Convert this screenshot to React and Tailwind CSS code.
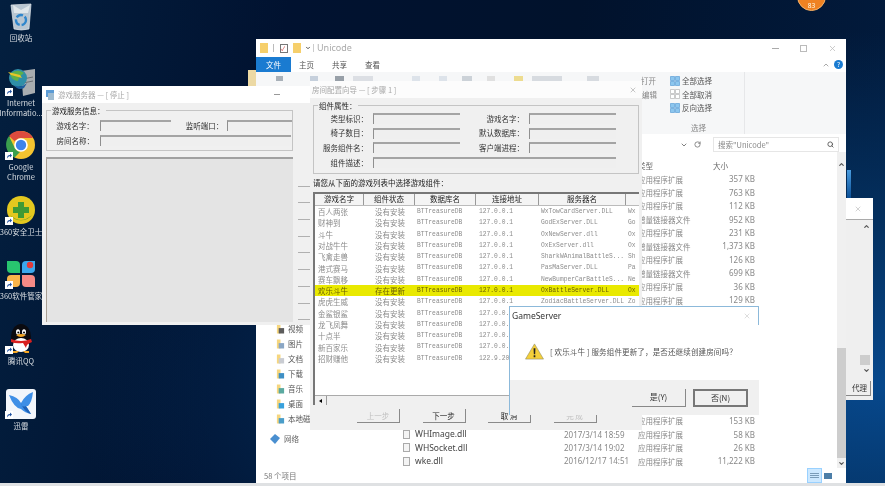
import { ChevronDown, ChevronUp, RotateCw, Search, X } from "lucide-react"

const cjk = "font-['Noto_Sans_CJK_SC',sans-serif]"

const ShortcutMark = () => (
  <svg viewBox="0 0 8 8" className="absolute left-[4px] bottom-0 w-[8px] h-[8px]">
    <rect width="8" height="8" fill="#fff" />
    <path d="M2 6.5 C2 4 3 3 5 3 L5 1.6 L7 3.6 L5 5.6 L5 4.2 C3.8 4.2 3 4.8 2 6.5Z" fill="#1c4fa0" />
  </svg>
)

const RecycleBin = () => (
  <svg viewBox="0 0 30 30" className="w-[30px] h-[30px]">
    <path d="M5 4 L25 3 L23 28 Q15 30 8 28Z" fill="#b8c6d2" stroke="#e4eaee" strokeWidth="0.7" />
    <path d="M7 4 L15 9 L24 4 L22 12 L8 12Z" fill="#dfe6ea" />
    <circle cx="15" cy="19" r="5" fill="none" stroke="#2f86cc" strokeWidth="2.4" strokeDasharray="7 2" />
  </svg>
)

const IisIcon = () => (
  <svg viewBox="0 0 30 30" className="w-[30px] h-[30px]">
    <path d="M15 5 L29 3 L29 27 L17 30Z" fill="#a9adb0" />
    <path d="M17 13 L27 11 M17 17 L27 15" stroke="#6c7074" strokeWidth="1" />
    <circle cx="12" cy="12" r="9" fill="#2f8fa8" />
    <path d="M4 8 Q11 2 18 7 Q13 10 12 15 Q6 15 4 8Z" fill="#5fb04a" />
    <path d="M2 6 L14 9 L16 12 L5 9Z" fill="#e8c52a" />
    <path d="M8 19 Q14 23 21 17 L18 22 Q12 25 8 19Z" fill="#1c5f9e" />
  </svg>
)

const ChromeIcon = () => (
  <svg viewBox="0 0 30 30" className="w-[30px] h-[30px]">
    <circle cx="15" cy="15" r="14" fill="#f4c430" />
    <path d="M15 1 A14 14 0 0 1 27.1 8 L15 8 A7 7 0 0 0 8.9 11.5 L3 6 A14 14 0 0 1 15 1Z" fill="#dd4b3e" />
    <path d="M3 6 L9 18.5 A7 7 0 0 0 14 22 L8.5 27.4 A14 14 0 0 1 3 6Z" fill="#3a9e4d" />
    <circle cx="15" cy="15" r="6.8" fill="#fff" />
    <circle cx="15" cy="15" r="5.2" fill="#3f83ea" />
  </svg>
)

const SafeIcon = () => (
  <svg viewBox="0 0 30 30" className="w-[30px] h-[30px]">
    <circle cx="15" cy="15" r="14" fill="#e3c81f" />
    <path d="M4 20 A14 14 0 0 0 26 20 Q15 30 4 20Z" fill="#4e9a2c" />
    <path d="M12 7 H18 V12 H23 V18 H18 V23 H12 V18 H7 V12 H12Z" fill="#3f9a35" />
  </svg>
)

const SoftIcon = () => (
  <svg viewBox="0 0 30 30" className="w-[30px] h-[30px]">
    <path d="M1 2 H10 Q14 2 14 6 V14 H5 Q1 14 1 10Z" fill="#28c46f" />
    <path d="M29 2 H20 Q16 2 16 6 V14 H25 Q29 14 29 10Z" fill="#3aa8ee" />
    <path d="M1 28 H10 Q14 28 14 24 V16 H5 Q1 16 1 20Z" fill="#f9b54a" />
    <path d="M29 28 H20 Q16 28 16 24 V16 H25 Q29 16 29 20Z" fill="#f58a86" />
    <circle cx="24" cy="6" r="3.2" fill="#e23b3b" />
  </svg>
)

const QqIcon = () => (
  <svg viewBox="0 0 30 30" className="w-[30px] h-[30px]">
    <ellipse cx="15" cy="13" ry="13" rx="10" fill="#0b0b10" />
    <ellipse cx="15" cy="21" rx="8" ry="7" fill="#fff" />
    <ellipse cx="12" cy="8" rx="2" ry="2.8" fill="#fff" />
    <ellipse cx="18" cy="8" rx="2" ry="2.8" fill="#fff" />
    <circle cx="12.3" cy="8.4" r="1" fill="#000" />
    <circle cx="18" cy="8.4" r="1" fill="#000" />
    <path d="M10 11 Q15 9 20 11 Q15 15 10 11Z" fill="#f5a623" />
    <path d="M5 15 Q15 19 25 15 L26 18 Q20 20 20 24 L17 19 Q10 20 5 18Z" fill="#d8201f" />
    <path d="M7 27 L13 27 L11 29 L7 29Z M17 27 L23 27 L23 29 L19 29Z" fill="#f5a623" />
  </svg>
)

const XunleiIcon = () => (
  <svg viewBox="0 0 30 30" className="w-[30px] h-[30px]">
    <rect width="30" height="30" rx="3" fill="#f3f6fb" />
    <path d="M3 6 Q12 8 15 14 Q19 6 27 3 Q26 13 22 17 L20 17 L25 25 Q19 24 15 20 Q8 19 3 6Z" fill="#3f8fe6" />
    <path d="M15 14 Q16 19 20 17 L25 25 Q18 23 15 14Z" fill="#1f62b8" />
  </svg>
)

const desktopItems = [
  { key: "bin", icon: <RecycleBin />, lines: ["回收站"] },
  { key: "iis", icon: <IisIcon />, lines: ["Internet", "Informatio..."], shortcut: true },
  { key: "chrome", icon: <ChromeIcon />, lines: ["Google", "Chrome"], shortcut: true },
  { key: "safe", icon: <SafeIcon />, lines: ["360安全卫士"], shortcut: true },
  { key: "soft", icon: <SoftIcon />, lines: ["360软件管家"], shortcut: true },
  { key: "qq", icon: <QqIcon />, lines: ["腾讯QQ"], shortcut: true },
  { key: "xl", icon: <XunleiIcon />, lines: ["迅雷"], shortcut: true },
]

const Folder = ({ color = "#f6cf6b" }) => (
  <svg viewBox="0 0 10 10" className="w-[9px] h-[10px] shrink-0">
    <path d="M1 0 H5 V10 H1Z" fill="#f6d67e" />
    <path d="M3 4 H9 V10 H3Z" fill={color} />
  </svg>
)

const sideItems = [
  { name: "视频", color: "#5c5c5c" },
  { name: "图片", color: "#8aa6c4" },
  { name: "文档", color: "#c9ccd2" },
  { name: "下载", color: "#3f8fc4" },
  { name: "音乐", color: "#5aa9a0" },
  { name: "桌面", color: "#38a1dc" },
]

const appExt = "应用程序扩展"
const ilk = "增量链接器文件"
const fileRows = [
  { type: appExt, size: "357 KB" },
  { type: appExt, size: "763 KB" },
  { type: appExt, size: "112 KB" },
  { type: ilk, size: "952 KB" },
  { type: appExt, size: "231 KB" },
  { type: ilk, size: "1,373 KB" },
  { type: appExt, size: "126 KB" },
  { type: ilk, size: "699 KB" },
  { type: appExt, size: "36 KB" },
  { type: appExt, size: "129 KB" },
  {}, {}, {}, {}, {}, {}, {}, {},
  { type: appExt, size: "153 KB" },
  { name: "WHImage.dll", date: "2017/3/14 18:59", type: appExt, size: "58 KB" },
  { name: "WHSocket.dll", date: "2017/3/14 19:02", type: appExt, size: "26 KB" },
  { name: "wke.dll", date: "2016/12/17 14:51", type: appExt, size: "11,222 KB" },
]

const games = [
  ["百人两张", "没有安装", "127.0.0.1", "WxTowCardServer.DLL", "Wx"],
  ["财神到", "没有安装", "127.0.0.1", "GodExServer.DLL", "Go"],
  ["斗牛", "没有安装", "127.0.0.1", "OxNewServer.dll", "Ox"],
  ["对战牛牛", "没有安装", "127.0.0.1", "OxExServer.dll", "Ox"],
  ["飞禽走兽", "没有安装", "127.0.0.1", "SharkWAnimalBattleS...", "Sh"],
  ["港式赛马", "没有安装", "127.0.0.1", "PasMaServer.DLL", "Pa"],
  ["赛车飘移", "没有安装", "127.0.0.1", "NewBumperCarBattleS...", "Ne"],
  ["欢乐斗牛", "存在更新", "127.0.0.1", "OxBattleServer.DLL", "Ox"],
  ["虎虎生威", "没有安装", "127.0.0.1", "ZodiacBattleServer.DLL", "Zo"],
  ["金鲨银鲨", "没有安装", "127.0.0.1", "", ""],
  ["龙飞凤舞", "没有安装", "127.0.0.1", "", ""],
  ["十点半", "没有安装", "127.0.0.1", "", ""],
  ["新百家乐", "没有安装", "127.0.0.1", "", ""],
  ["招财赚他", "没有安装", "122.9.20", "", ""],
]

const Field = ({ className }) => (
  <div className={`h-[11px] border-t-2 border-l border-t-[#a4a4a4] border-l-[#8f8f8f] bg-[#efefef] ${className}`} />
)

const Label = ({ className, children }) => (
  <div className={`text-[7.5px] leading-none whitespace-nowrap text-[#333] ${className}`}>{children}</div>
)

const GroupBox = ({ title, className, children }) => (
  <div className={`relative border border-[#c4c4c4] ${className}`}>
    <div className="absolute left-[4px] top-[-5px] bg-[#f0f0f0] px-[1px] text-[7.5px] leading-[9px] text-[#222]">{title}</div>
    {children}
  </div>
)

const WizardButton = ({ disabled, children }) => (
  <div
    className={`w-[43px] h-[14px] flex items-center justify-center border-b border-r border-b-[#8a8a8a] border-r-[#8a8a8a] text-[7.5px] ${
      disabled ? "text-[#c0c0c0]" : "text-[#222]"
    }`}
  >
    {children}
  </div>
)

const Explorer = () => (
  <div className={`absolute left-[256px] top-[39px] w-[590px] h-[444px] bg-white flex flex-col ${cjk}`}>
    <div className="h-[18px] flex items-center pl-[4px] text-[9px] text-[#aaa]">
      <div className="w-[8px] h-[10px] bg-[#f6cf6b]" />
      <div className="w-px h-[8px] bg-[#bbb] ml-[5px]" />
      <div className="w-[8px] h-[9px] border border-[#777] ml-[6px] text-[6px] leading-[7px] text-[#c33]">✓</div>
      <div className="w-[8px] h-[10px] bg-[#f6cf6b] ml-[5px]" />
      <ChevronDown className="w-[6px] h-[6px] ml-[4px] text-[#555]" strokeWidth={4} />
      <div className="w-px h-[8px] bg-[#ccc] ml-[2px]" />
      <span className="ml-[3px] font-['Noto_Sans',sans-serif]">Unicode</span>
      <div className="ml-auto flex items-center">
        <div className="w-[7px] h-px bg-[#aaa] mr-[21px]" />
        <div className="w-[7px] h-[7px] border border-[#bbb] mr-[21px]" />
        <X className="w-[9px] h-[9px] text-[#bbb] mr-[9px]" strokeWidth={2} />
      </div>
    </div>
    <div className="h-[15px] flex items-center text-[7.5px] text-[#555]">
      <div className="w-[35px] h-full bg-[#1a7bd1] text-white flex items-center justify-center">文件</div>
      <div className="ml-[8px]">主页</div>
      <div className="ml-[18px]">共享</div>
      <div className="ml-[18px]">查看</div>
      <ChevronUp className="ml-auto w-[8px] h-[8px] text-[#aaa] mr-[4px]" strokeWidth={3} />
      <div className="w-[9px] h-[9px] rounded-full bg-[#1a7bd1] text-white text-[6.5px] leading-[9px] text-center mr-[3px]">?</div>
    </div>
    <div className="h-[62px] bg-[#f6f7f8] flex text-[7.5px] text-[#888]">
      <div className="w-[385px] flex flex-col">
        <div className="h-[5px] mt-[4px] flex items-center gap-[9px] pl-[20px]">
          <div className="w-[7px] h-[5px] bg-[#a8b0b8]" />
          <div className="w-[8px] h-[5px] bg-[#c6d0dc] ml-[18px]" />
          <div className="w-[9px] h-[5px] bg-[#98a0a8] ml-[8px]" />
          <div className="w-[20px] h-[5px] bg-[#dcdfe4]" />
          <div className="w-[8px] h-[5px] bg-[#dde3ea] ml-[30px]" />
          <div className="w-[8px] h-[5px] bg-[#dde3ea] ml-[10px]" />
          <div className="w-[10px] h-[5px] bg-[#ccd2d8] ml-[6px]" />
          <div className="w-[8px] h-[5px] bg-[#e0e0e0] ml-[6px]" />
          <div className="w-[9px] h-[5px] bg-[#eddc90] ml-[10px]" />
          <div className="w-[30px] h-[5px] bg-[#d7dbe0]" />
          <div className="w-[12px] h-[5px] bg-[#d7dbe0] ml-[16px]" />
        </div>
        <div className="ml-[385px] mt-[-5px] leading-[10px] whitespace-nowrap">打开</div>
        <div className="ml-[386px] mt-[3.5px] leading-[10px] whitespace-nowrap">编辑</div>
      </div>
      <div className="w-[75px] ml-[29px] border-r border-[#e6e7e9] flex flex-col pt-[2px] text-[#555]">
        {["全部选择", "全部取消", "反向选择"].map((label, i) => (
          <div key={label} className="h-[13.5px] flex items-center gap-[2px]">
            <svg viewBox="0 0 10 10" className="w-[10px] h-[10px]">
              <path d="M0.5 0.5 H4.5 V4.5 H0.5Z M5.5 0.5 H9.5 V4.5 H5.5Z M0.5 5.5 H4.5 V9.5 H0.5Z M5.5 5.5 H9.5 V9.5 H5.5Z" fill={i === 1 ? "#fff" : "#8cc6ee"} stroke={i === 1 ? "#aaa" : "#4c96d4"} strokeWidth="0.6" />
            </svg>
            {label}
          </div>
        ))}
        <div className="pl-[21px] mt-[7px] text-[#888]">选择</div>
      </div>
    </div>
    <div className="h-[18px] flex items-end">
      <div className="ml-auto flex items-center gap-[6px] mr-[7px] text-[#666]">
        <ChevronDown className="w-[8px] h-[8px]" strokeWidth={2.5} />
        <RotateCw className="w-[7px] h-[7px]" strokeWidth={2.5} />
        <div className="w-[126px] h-[15px] ml-[6px] border border-[#e6e6e6] flex items-center pl-[4px] pr-[4px] text-[7.5px] text-[#888]">
          搜索"Unicode"
          <Search className="ml-auto w-[7px] h-[7px] text-[#555]" strokeWidth={3} />
        </div>
      </div>
    </div>
    <div className="flex-1 flex min-h-0">
      <div className="w-[144px] flex flex-col justify-end pb-[16.5px] text-[7.5px] text-[#555]">
        {sideItems.map((item) => (
          <div key={item.name} className="h-[15px] flex items-center gap-[3px] pl-[20px]">
            <Folder color={item.color} />
            {item.name}
          </div>
        ))}
        <div className="h-[15px] flex items-center gap-[3px] pl-[20px]">
          <Folder color="#4a9dc9" />
          本地磁盘
        </div>
        <div className="h-[25px] flex items-center gap-[4px] pl-[14px] text-[#666]">
          <svg viewBox="0 0 10 10" className="w-[10px] h-[10px]">
            <path d="M5 0 L10 4 L5 10 L0 5Z" fill="#4a8fd0" />
          </svg>
          网络
        </div>
      </div>
      <div className="w-[355px] pt-[6.5px]">
        <div className="h-[14px] flex items-center text-[7.5px] text-[#666]">
          <div className="ml-[238px] w-[75px]">类型</div>
          <div>大小</div>
        </div>
        {fileRows.map((row, i) => (
          <div key={i} className="h-[13.45px] flex items-center text-[7.5px] text-[#888]">
            <div className="w-[15px] pl-[3px]">
              {row.name && <div className="w-[7px] h-[9px] border border-[#aaa] bg-[#f4f4f4]" />}
            </div>
            <div className="w-[149px] font-['Noto_Sans',sans-serif] text-[8.5px] text-[#444]">{row.name}</div>
            <div className="w-[74px] font-['Noto_Sans',sans-serif] text-[8px] whitespace-nowrap">{row.date}</div>
            <div className="w-[73px] whitespace-nowrap">{row.type}</div>
            <div className="w-[44px] text-right font-['Noto_Sans',sans-serif] text-[8px] whitespace-nowrap">{row.size}</div>
          </div>
        ))}
      </div>
      <div className="ml-auto w-[9px] flex flex-col">
        <div className="h-[16px] flex items-end justify-center bg-[#f0f0f0]">
          <ChevronUp className="w-[7px] h-[7px] text-[#555]" strokeWidth={4} />
        </div>
        <div className="h-[180px] bg-[#f0f0f0]" />
        <div className="h-[110px] bg-[#cdcdcd]" />
        <div className="h-[10px] flex items-center justify-center bg-[#f0f0f0]">
          <ChevronDown className="w-[7px] h-[7px] text-[#555]" strokeWidth={4} />
        </div>
      </div>
    </div>
    <div className="h-[15px] flex items-center pl-[8px] text-[7.5px] text-[#777]">
      58 个项目
      <div className="ml-auto mr-[14px] flex items-center">
        <div className="w-[15px] h-[15px] bg-[#cce8ff] border border-[#99d1ff] flex flex-col justify-center gap-[1px] px-[2px]">
          <div className="h-px bg-[#7a9cb8]" />
          <div className="h-px bg-[#7a9cb8]" />
          <div className="h-px bg-[#7a9cb8]" />
        </div>
        <div className="w-[8px] h-[6px] ml-[2px] bg-[#4c7ea8]" />
      </div>
    </div>
  </div>
)

const GameWindow = () => (
  <div className={`absolute left-[42px] top-[86px] w-[268px] h-[239px] bg-[#f0f0f0] flex flex-col ${cjk}`}>
    <div className="h-[17px] bg-white flex items-center pl-[3px] text-[7.5px] text-[#a8a8a8]">
      <svg viewBox="0 0 10 10" className="w-[10px] h-[10px] mr-[3px]">
        <rect x="1" y="0" width="8" height="7" fill="#5b9bd5" />
        <rect x="3" y="3" width="6" height="7" fill="#9ebbd0" />
      </svg>
      游戏服务器 — [ 停止 ]
      <div className="w-[6px] h-px bg-[#999] ml-[145px]" />
    </div>
    <div className="flex flex-1 min-h-0">
      <div className="w-[251px] pl-[4px] pt-[7px] flex flex-col">
        <GroupBox title="游戏服务信息：" className="w-[247px] h-[41px] pt-[7px] pl-[1px]">
          <div className="flex items-center h-[15px]">
            <Label className="w-[46px] text-right">游戏名字：</Label>
            <Field className="w-[72px] ml-[6px]" />
            <Label className="w-[52px] text-right">监听端口：</Label>
            <Field className="w-[65px] ml-[4px]" />
          </div>
          <div className="flex items-center h-[15px]">
            <Label className="w-[46px] text-right">房间名称：</Label>
            <Field className="w-[191px] ml-[6px]" />
          </div>
        </GroupBox>
        <div className="mt-[6px] w-[247px] h-[165px] bg-[#e4e4e4] border-t-2 border-l border-t-[#a0a0a0] border-l-[#a89f94]" />
      </div>
      <div className="flex-1 flex flex-col pt-[67px] pl-[5px]">
        {[0, 1, 2, 3, 4, 5, 6, 7, 8].map((n) => (
          <div key={n} className="h-[16.7px] shrink-0 border-b border-[#b0b0b0]" />
        ))}
      </div>
    </div>
  </div>
)

const WizardWindow = () => (
  <div className={`absolute left-[310px] top-[81px] w-[332px] h-[349px] bg-[#f0f0f0] flex flex-col ${cjk}`}>
    <div className="h-[17px] bg-[#fcfcfc] flex items-center pl-[2px] text-[7.5px] text-[#a8a8a8]">
      房间配置向导 — [ 步骤 1 ]
      <X className="ml-auto mr-[5px] w-[8px] h-[8px] text-[#aaa]" strokeWidth={2} />
    </div>
    <div className="pl-[3px] flex flex-col flex-1 min-h-0">
      <GroupBox title="组件属性：" className="mt-[7px] w-[326px] h-[69px] pt-[5px]">
        {[
          ["类型标识：", "游戏名字："],
          ["椅子数目：", "默认数据库："],
          ["服务组件名：", "客户端进程："],
        ].map(([left, right]) => (
          <div key={left} className="flex items-center h-[14.7px]">
            <Label className="w-[54px] text-right">{left}</Label>
            <Field className="w-[87px] ml-[5px]" />
            <Label className="w-[64px] text-right">{right}</Label>
            <Field className="w-[87px] ml-[5px]" />
          </div>
        ))}
        <div className="flex items-center h-[14.7px]">
          <Label className="w-[54px] text-right">组件描述：</Label>
          <Field className="w-[243px] ml-[5px]" />
        </div>
      </GroupBox>
      <div className="h-[18px] flex items-center text-[7.5px] text-[#222]">请您从下面的游戏列表中选择游戏组件：</div>
      <div className="w-[326px] h-[213px] bg-white border-t-2 border-l-2 border-t-[#777] border-l-[#777] flex flex-col overflow-hidden">
        <div className="h-[12px] flex text-[7.5px] text-[#222] bg-[#f4f4f4] border-b border-[#bbb] text-center leading-[10px]">
          <div className="w-[49px] border-r border-[#999]">游戏名字</div>
          <div className="w-[51px] border-r border-[#999]">组件状态</div>
          <div className="w-[61px] border-r border-[#999]">数据库名</div>
          <div className="w-[63px] border-r border-[#999]">连接地址</div>
          <div className="w-[87px] border-r border-[#999]">服务器名</div>
        </div>
        <div className="flex-1 text-[7.5px] text-[#8c8c8c]">
          {games.map(([name, state, ip, server, extra]) => {
            const active = state === "存在更新"
            return (
              <div key={name} className={`h-[11.3px] flex items-center whitespace-nowrap ${active ? "bg-[#e9e900] text-[#6e6200]" : ""}`}>
                <div className="w-[49px] pl-[3px]">{name}</div>
                <div className="w-[51px] pl-[11px]">{state}</div>
                <div className="w-[61px] pl-[2px] font-['Liberation_Mono',monospace] text-[6.3px]">BTTreasureDB</div>
                <div className="w-[63px] pl-[3px] font-['Liberation_Mono',monospace] text-[6.3px]">{ip}</div>
                <div className="w-[87px] pl-[2px] font-['Liberation_Mono',monospace] text-[6.3px] overflow-hidden">{server}</div>
                <div className="pl-[2px] font-['Liberation_Mono',monospace] text-[6.3px]">{extra}</div>
              </div>
            )
          })}
        </div>
        <div className="h-[10px] flex bg-[#f0f0f0] border-t border-[#aaa]">
          <div className="w-[12px] flex items-center justify-center border-r border-[#999]">
            <div className="w-0 h-0 border-y-[2px] border-y-transparent border-r-[3px] border-r-black" />
          </div>
        </div>
      </div>
      <div className="flex gap-[22.5px] pl-[44px] mt-[4px]">
        <WizardButton disabled>上一步</WizardButton>
        <WizardButton>下一步</WizardButton>
        <WizardButton>取 消</WizardButton>
        <WizardButton disabled>完 成</WizardButton>
      </div>
    </div>
  </div>
)

const ConfirmDialog = () => (
  <div className={`absolute left-[509px] top-[306px] w-[250px] h-[109px] bg-white border-t border-l border-[#8cb9da] flex flex-col ${cjk}`}>
    <div className="h-[18px] flex items-center pl-[2px] border-r border-[#8cb9da] font-['Noto_Sans',sans-serif] text-[8.5px] text-[#333]">
      GameServer
      <X className="ml-auto mr-[7px] w-[8px] h-[8px] text-[#ccc]" strokeWidth={2} />
    </div>
    <div className="flex-1 flex items-center pl-[15px] pb-[2px] text-[7.5px] tracking-[0.15px] text-[#555]">
      <svg viewBox="0 0 20 17" className="w-[19px] h-[17px] shrink-0">
        <path d="M10 0.5 L19.5 16.5 H0.5Z" fill="#f4cf3a" stroke="#8f8a60" strokeWidth="0.6" />
        <path d="M9 5 H11 L10.7 11.5 H9.3Z M9.1 12.5 H10.9 V14.5 H9.1Z" fill="#222" />
      </svg>
      <span className="ml-[6px] whitespace-nowrap">[ 欢乐斗牛 ] 服务组件更新了，是否还继续创建房间吗？</span>
    </div>
    <div className="h-[35px] bg-[#f0f0f0] flex items-center justify-end gap-[7px] pr-[11px] text-[8px] text-[#333]">
      <div className="w-[54px] h-[18px] flex items-center justify-center border-b border-r border-[#888]">是(Y)</div>
      <div className="w-[55px] h-[18px] flex items-center justify-center border-2 border-[#777]">否(N)</div>
    </div>
  </div>
)

export default function App() {
  return (
    <div className="w-[885px] h-[486px] flex flex-col overflow-hidden bg-[#dfe1e3] blur-[0.45px] font-['Noto_Sans','Noto_Sans_CJK_SC',sans-serif]">
      <div className="relative flex-1 bg-[radial-gradient(ellipse_at_100%_80%,#07488c_0%,#04305f_30%,transparent_65%),linear-gradient(100deg,#031f3f_0%,#011230_30%,#01122c_60%,#021c3f_100%)]">
        <div className="absolute left-[847px] top-[170px] w-[4px] h-[28px] bg-[linear-gradient(#4a9de0,#0b4f96)]" />
        <div className="absolute left-[797px] top-[-18px] w-[29px] h-[29px] rounded-full bg-[#ef8222] border border-[#f7b46a] flex items-end justify-center text-[6.5px] leading-[9px] text-[#ffe]">83</div>

        {/* desktop icons */}
        <div className={`w-[42px] pt-[1px] flex flex-col ${cjk}`}>
          {desktopItems.map((item) => (
            <div key={item.key} className="relative h-[64.6px] flex flex-col items-center">
              <div className="relative w-[40px] flex justify-center">
                {item.icon}
                {item.shortcut && <ShortcutMark />}
              </div>
              <div className="mt-[2px] text-[7.5px] leading-[10px] text-center whitespace-nowrap text-[#d8dde2]">
                {item.lines.map((line) => (
                  <div key={line}>{line}</div>
                ))}
              </div>
            </div>
          ))}
        </div>

        {/* window behind on the right */}
        <div className={`absolute left-[820px] top-[198px] w-[53px] h-[202px] bg-[#efefef] flex flex-col ${cjk}`}>
          <div className="h-[22px] bg-white border-b border-[#aaa] flex items-center justify-end pr-[11px]">
            <X className="w-[8px] h-[8px] text-[#bbb]" strokeWidth={2} />
          </div>
          <div className="flex-1 flex flex-col items-end pr-[3px]">
            <ChevronUp className="mt-[3px] w-[7px] h-[7px] text-[#555]" strokeWidth={4} />
            <div className="mt-auto w-[10px] h-[10px] bg-[#cdcdcd]" />
            <ChevronDown className="w-[7px] h-[7px] mt-[2px] text-[#555]" strokeWidth={4} />
            <div className="mt-[7px] mr-[-1px] w-[30px] h-[15px] mb-[4px] border-b border-r border-[#888] text-[7.5px] text-[#333] text-right leading-[14px] pr-[3px]">代理</div>
          </div>
        </div>

        <div className="absolute left-[248px] top-[70px] w-[8px] h-[16px] bg-[#ecd9a4]" />

        <Explorer />
        <GameWindow />
        <WizardWindow />
        <ConfirmDialog />
      </div>
      <div className="h-[3px] shrink-0" />
    </div>
  )
}
